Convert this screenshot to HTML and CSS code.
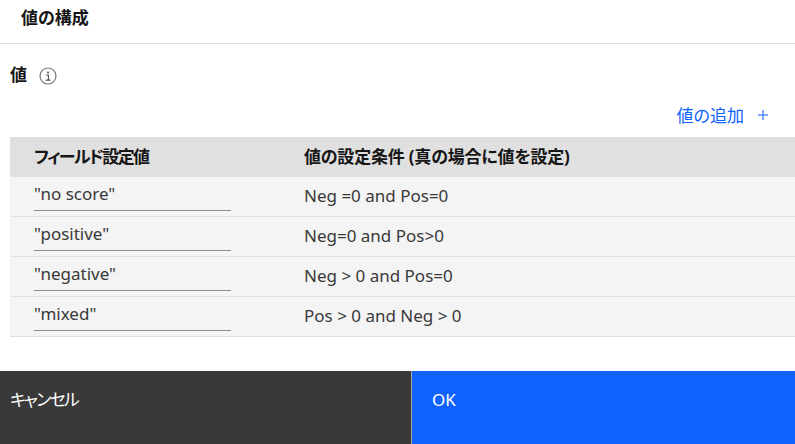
FILE: index.html
```html
<!DOCTYPE html>
<html lang="ja">
  <head>
    <meta charset="UTF-8" />
    <title>値の構成</title>
    <link rel="stylesheet" href="styles.css">
  </head>
  <body>
    <div class="dialog">
      <div class="dialog-header">値の構成</div>

      <div class="dialog-body">
        <div class="section-label">
          <span>値</span>
          <svg class="info-icon" width="18" height="18" viewBox="0 0 18 18" fill="none">
            <circle cx="9" cy="9" r="8" stroke="#6f6f6f" stroke-width="1.1" />
            <circle cx="9" cy="5.4" r="1" fill="#525252" />
            <path d="M7.2 8h2.2v5M6.8 13.1h4.6" stroke="#525252" stroke-width="1.1" />
          </svg>
        </div>

        <div class="add-row">
          <a class="add-link">値の追加</a>
          <svg class="add-icon" width="12" height="12" viewBox="0 0 12 12" fill="none">
            <path d="M6 1v10M1 6h10" stroke="#5a8fff" stroke-width="1.5" />
          </svg>
        </div>

        <div class="value-table">
          <div class="table-row table-head">
            <div class="col-value head-field">フィールド設定値</div>
            <div class="col-cond">値の設定条件 (真の場合に値を設定)</div>
          </div>

          <div class="table-row">
            <div class="col-value"><div class="value-input">"no score"</div></div>
            <div class="col-cond">Neg =0 and Pos=0</div>
          </div>
          <div class="table-row">
            <div class="col-value"><div class="value-input">"positive"</div></div>
            <div class="col-cond">Neg=0 and Pos&gt;0</div>
          </div>
          <div class="table-row">
            <div class="col-value"><div class="value-input">"negative"</div></div>
            <div class="col-cond">Neg &gt; 0 and Pos=0</div>
          </div>
          <div class="table-row">
            <div class="col-value"><div class="value-input">"mixed"</div></div>
            <div class="col-cond">Pos &gt; 0 and Neg &gt; 0</div>
          </div>
        </div>
      </div>

      <div class="dialog-footer">
        <button class="btn btn-cancel">キャンセル</button>
        <button class="btn btn-ok">OK</button>
      </div>
    </div>
  </body>
</html>
```

FILE: styles.css
```css
html,
body {
  margin: 0;
  height: 100%;
  overflow: hidden;
}

body {
  font-family: "Noto Sans", "Noto Sans CJK JP", sans-serif;
  font-size: 17px;
  font-feature-settings: "palt";
  color: #262626;
  background-color: #fff;
}

.dialog {
  display: flex;
  flex-direction: column;
  height: 444px;
}

.dialog-header {
  height: 43px;
  padding-left: 21px;
  line-height: 36px;
  font-weight: 700;
  color: #161616;
  border-bottom: 1px solid #e0e0e0;
}

.dialog-body {
  flex: 1;
  padding-left: 10px;
}

.section-label {
  display: flex;
  align-items: center;
  gap: 12px;
  height: 24px;
  margin-top: 19px;
  font-weight: 700;
  color: #161616;
}

.section-label span {
  margin-bottom: 4px;
}

.info-icon {
  margin-top: 2px;
}

.add-row {
  display: flex;
  justify-content: flex-end;
  align-items: center;
  height: 24px;
  margin-top: 16px;
  padding-right: 26px;
  gap: 13px;
}

.add-link {
  margin-bottom: 2px;
  color: #0f62fe;
}

.value-table {
  margin-top: 10px;
}

.table-row {
  display: flex;
  height: 40px;
  box-sizing: border-box;
  background-color: #f4f4f4;
  border-bottom: 1px solid #e0e0e0;
}

.table-head {
  background-color: #e0e0e0;
  align-items: center;
  padding-bottom: 2px;
  font-weight: 700;
  color: #161616;
}

.head-field {
  letter-spacing: -1.6px;
}

.col-value {
  width: 294px;
  padding-left: 24px;
  box-sizing: border-box;
}

.col-cond {
  flex: 1;
  line-height: 38px;
  color: #393939;
}

.table-head .col-cond {
  line-height: normal;
  letter-spacing: -0.2px;
  color: #161616;
}

.value-input {
  width: 197px;
  height: 34px;
  box-sizing: border-box;
  line-height: 33px;
  color: #393939;
  border-bottom: 1px solid #8d8d8d;
}

.dialog-footer {
  display: flex;
  height: 73px;
}

.btn {
  border: none;
  margin: 0;
  padding: 0;
  font-family: inherit;
  font-size: 17px;
  font-feature-settings: inherit;
  color: #fff;
  text-align: left;
  height: 100%;
  display: flex;
  align-items: flex-start;
}

.btn-cancel {
  width: 412px;
  padding: 15px 0 0 10px;
  letter-spacing: -1.8px;
  background-color: #393939;
  border-right: 1px solid #a8a8a8;
  box-sizing: border-box;
}

.btn-ok {
  flex: 1;
  padding: 17px 0 0 20px;
  background-color: #0f62fe;
}
```
